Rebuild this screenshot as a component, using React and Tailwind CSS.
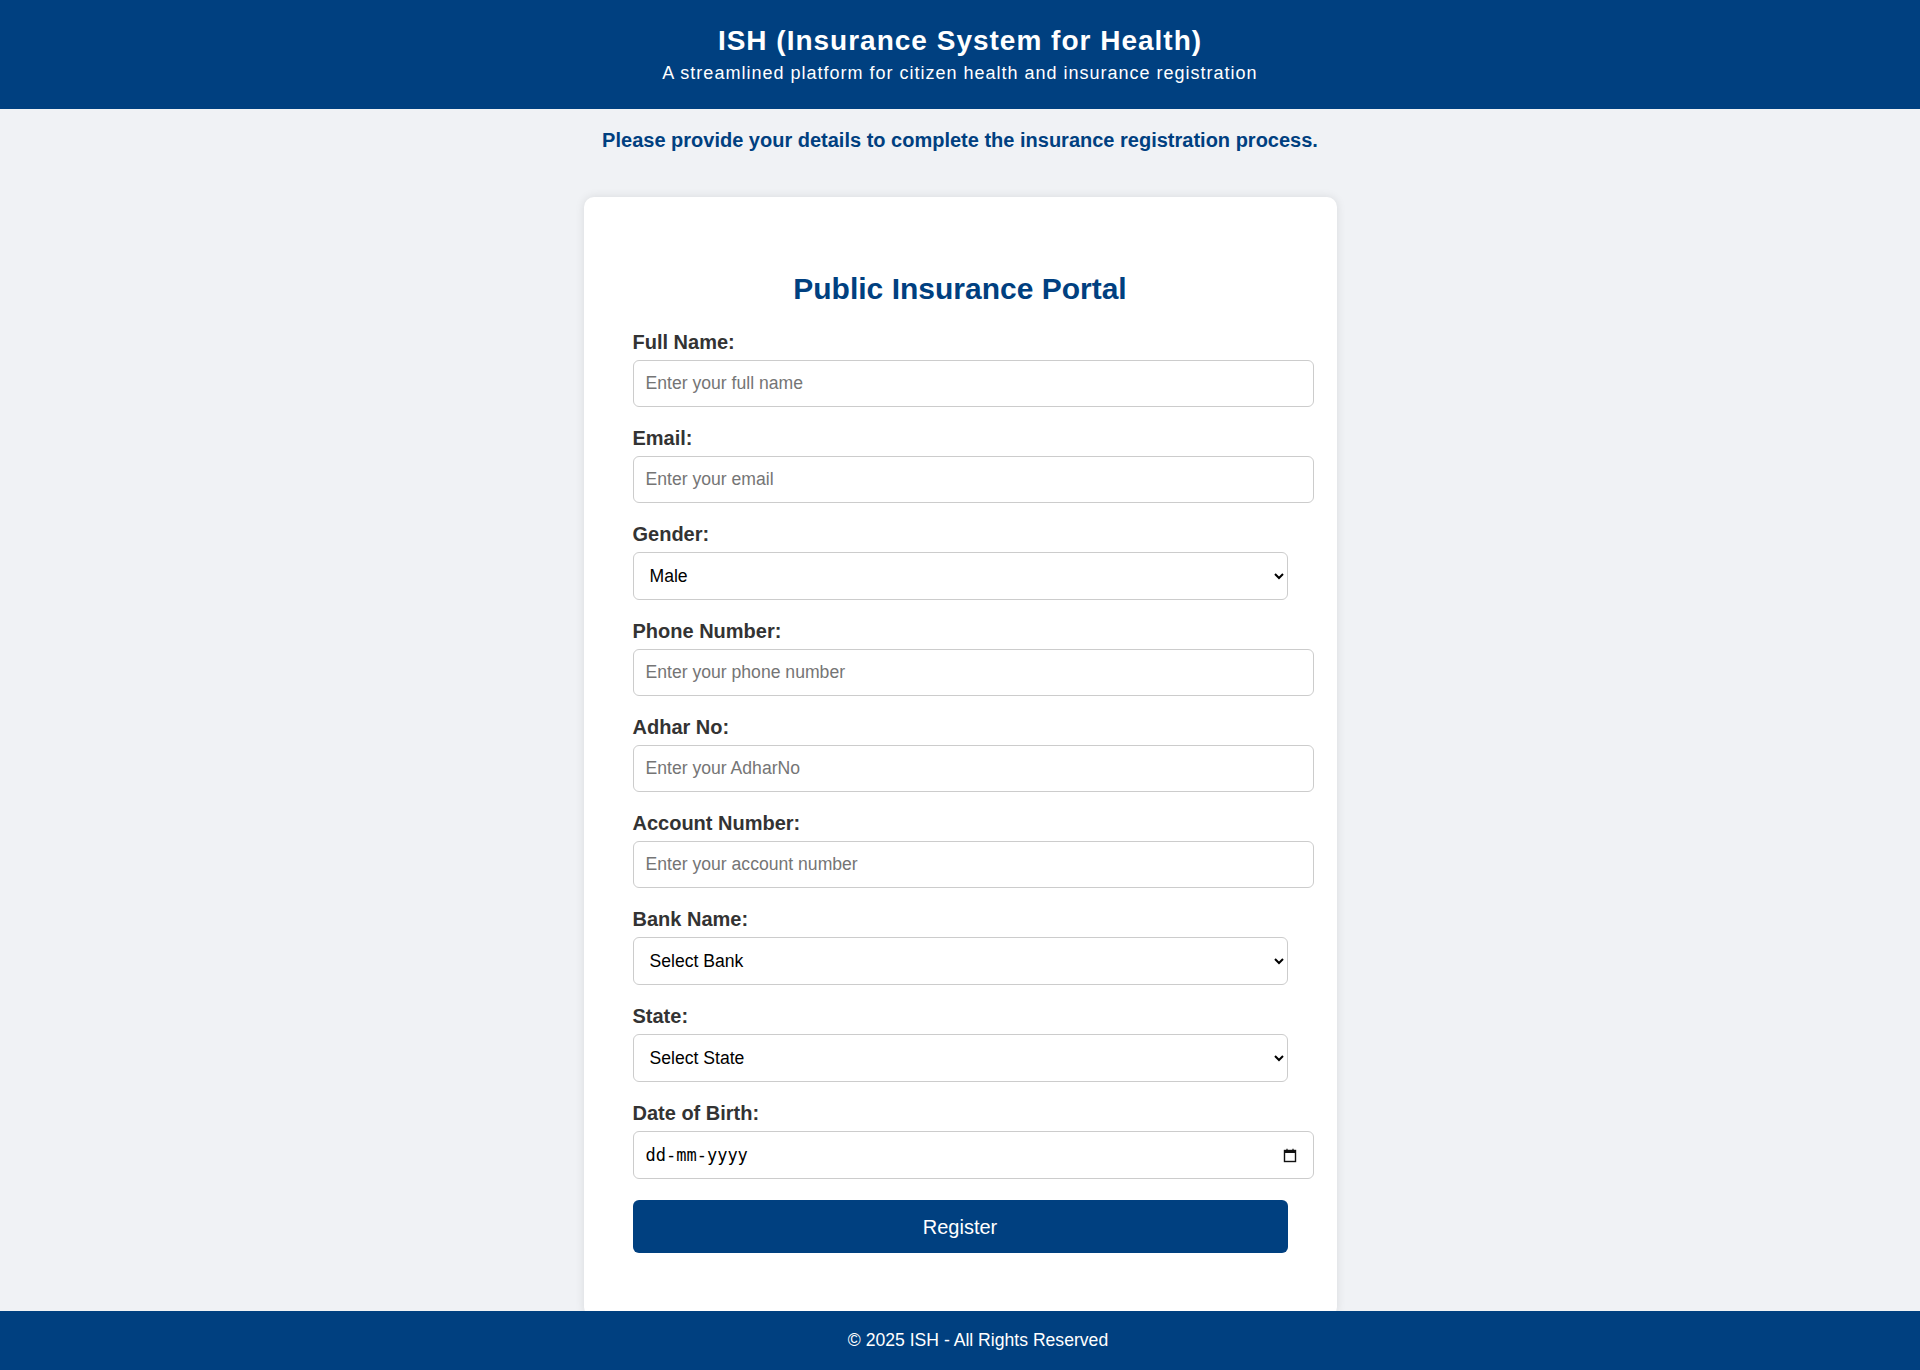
import { useState } from 'react'

const FIELDS = [
  { name: 'fullName', label: 'Full Name:', type: 'text', placeholder: 'Enter your full name' },
  { name: 'email', label: 'Email:', type: 'email', placeholder: 'Enter your email' },
  { name: 'gender', label: 'Gender:', type: 'select', options: ['Male', 'Female', 'Other'] },
  { name: 'phone', label: 'Phone Number:', type: 'text', placeholder: 'Enter your phone number' },
  { name: 'adhar', label: 'Adhar No:', type: 'text', placeholder: 'Enter your AdharNo' },
  { name: 'account', label: 'Account Number:', type: 'text', placeholder: 'Enter your account number' },
  { name: 'bank', label: 'Bank Name:', type: 'select', options: ['Select Bank', 'State Bank of India', 'HDFC Bank', 'ICICI Bank'] },
  { name: 'state', label: 'State:', type: 'select', options: ['Select State', 'Delhi', 'Maharashtra', 'Karnataka'] },
]

function CalendarIcon() {
  return (
    <svg width="14" height="15" viewBox="0 0 14 15" fill="none">
      <rect x="1.5" y="2.5" width="11" height="11" stroke="#111" strokeWidth="1.4" />
      <rect x="1" y="2" width="12" height="3" fill="#111" />
      <path d="M4 0.8v2M10 0.8v2" stroke="#111" strokeWidth="1.2" />
    </svg>
  )
}

export default function App() {
  const [form, setForm] = useState({ gender: 'Male', bank: 'Select Bank', state: 'Select State' })

  const update = (name) => (e) => setForm({ ...form, [name]: e.target.value })

  return (
    <div className="min-h-screen bg-[#f0f2f5] font-['Liberation_Sans',Arial,sans-serif]">
      <header className="bg-[#004080] text-white text-center pt-[25px] pb-[25px]">
        <h1 className="text-[28px] font-bold leading-[32px] tracking-[1px]">ISH (Insurance System for Health)</h1>
        <p className="mt-[6px] text-[18px] leading-[21px] tracking-[1px]">
          A streamlined platform for citizen health and insurance registration
        </p>
      </header>

      <p className="mt-[20px] text-center text-[20px] font-bold leading-[23px] text-[#004080]">
        Please provide your details to complete the insurance registration process.
      </p>

      <div className="mx-auto mt-[45px] w-[753px] rounded-[10px] bg-white px-[49px] pt-[75px] pb-[64px] shadow-[0_0_10px_rgba(0,0,0,0.1)]">
        <h2 className="mb-[25px] text-center text-[30px] font-bold leading-[34px] text-[#004080]">Public Insurance Portal</h2>

        <form onSubmit={(e) => e.preventDefault()}>
          {FIELDS.map((f) => (
            <div key={f.name} className="mb-[20px]">
              <label className="mb-[6px] block text-[20px] font-bold leading-[23px] text-[#333]">{f.label}</label>
              {f.type === 'select' ? (
                <select
                  value={form[f.name]}
                  onChange={update(f.name)}
                  className="block h-[48px] w-[655px] rounded-[6px] border border-[#ccc] bg-white px-[12px] text-[17.6px] text-black"
                >
                  {f.options.map((o) => (
                    <option key={o}>{o}</option>
                  ))}
                </select>
              ) : (
                <input
                  type={f.type}
                  value={form[f.name] || ''}
                  onChange={update(f.name)}
                  placeholder={f.placeholder}
                  className="block h-[47px] w-[681px] rounded-[6px] border border-[#ccc] px-[12px] text-[17.6px] text-black placeholder:text-[#757575]"
                />
              )}
            </div>
          ))}

          {/* Date of birth */}
          <div className="mb-[21px]">
            <label className="mb-[6px] block text-[20px] font-bold leading-[23px] text-[#333]">Date of Birth:</label>
            <div className="relative w-[681px]">
              <input
                type="text"
                value={form.dob || ''}
                onChange={update('dob')}
                placeholder="dd-mm-yyyy"
                className="block h-[48px] w-full rounded-[6px] border border-[#ccc] pl-[12px] pr-[40px] font-['DejaVu_Sans_Mono',monospace] text-[17px] text-black placeholder:text-black"
              />
              <span className="pointer-events-none absolute right-[17px] top-[17px]">
                <CalendarIcon />
              </span>
            </div>
          </div>

          <button
            type="submit"
            className="block h-[53px] w-[655px] rounded-[6px] bg-[#004080] text-[20px] text-white"
          >
            Register
          </button>
        </form>
      </div>

      <footer className="fixed inset-x-0 bottom-0 h-[59px] bg-[#004080] pl-[36px] text-center text-[17.6px] leading-[59px] text-white">
        © 2025 ISH - All Rights Reserved
      </footer>
    </div>
  )
}
